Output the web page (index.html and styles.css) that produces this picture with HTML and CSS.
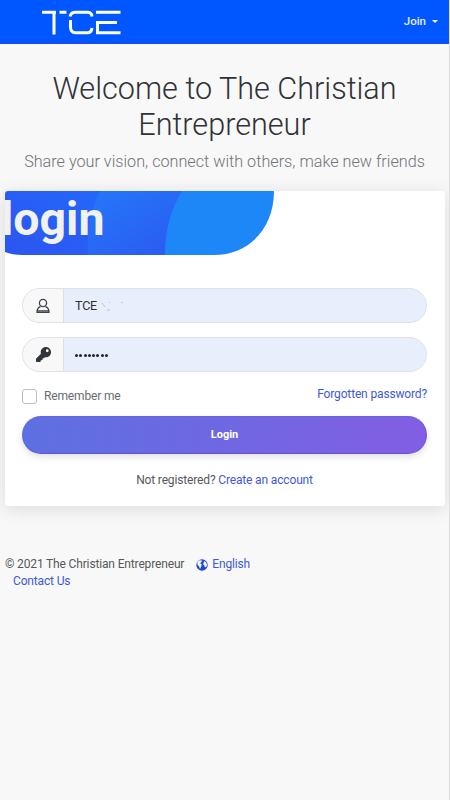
FILE: index.html
```html
<!DOCTYPE html>
<html lang="en">
<head>
<meta charset="utf-8">
<title>The Christian Entrepreneur</title>
<link rel="stylesheet" href="styles.css">
</head>
<body>
<header class="navbar">
  <svg class="logo" width="80" height="26" viewBox="0 0 80 26" role="img" aria-label="TCE">
    <g fill="none" stroke="#fff" stroke-width="3">
      <path d="M0 2.300H14M17.500 2.300H24.500M12 2.500V24.500"/>
      <path d="M28 6.500Q29 2.300 33.500 2.300H45.500Q49.500 2.300 50 6.500M28.500 10V17Q28.500 22.700 33.500 22.700H45.500Q49.500 22.700 50 18"/>
      <path d="M54 2.300H78.500M54 12.500H75M55.500 11V22.700H78.500"/>
    </g>
  </svg>
  <a class="join">Join<span class="caret"></span></a>
</header>
<main>
  <section class="hero">
    <h1>Welcome to The Christian<br>Entrepreneur</h1>
    <p>Share your vision, connect with others, make new friends</p>
  </section>
  <section class="card">
    <div class="banner">
      <svg class="banner-art" width="269" height="64" viewBox="0 0 269 65" preserveAspectRatio="none" aria-hidden="true">
        <defs>
          <linearGradient id="deep" x1="0" y1="1" x2="1" y2="0"><stop stop-color="#2c55ef"/><stop offset="1" stop-color="#2468fc"/></linearGradient>
          <linearGradient id="mid" x1="1" y1="1" x2="0" y2="0"><stop stop-color="#2c57f0"/><stop offset="1" stop-color="#2478f9"/></linearGradient>
        </defs>
        <path fill="url(#deep)" d="M0 0H110V65H18Q7 65 0 62Z"/>
        <path fill="url(#mid)" d="M95 0H190V65H83Q81 28 95 0Z"/>
        <path fill="#1e87f8" d="M177 0H269C269 39 243 65 209 65H160Q160 28 177 0Z"/>
      </svg>
      <h2>login</h2>
    </div>
    <form class="form">
      <div class="field">
        <span class="addon"><svg width="14" height="16" viewBox="0 0 14 16" fill="none" stroke="#3b434c" stroke-width="1.300"><circle cx="7" cy="5" r="3.600"/><path d="M4.500 8.700C2 9.500 1 11 1 14.300H13C13 11 12 9.500 9.500 8.700M1.500 12.800H12.500"/></svg></span>
        <span class="value">TCE<svg class="traces" width="26" height="10" viewBox="0 0 26 10" fill="none" stroke="#b9c4d4"><path d="M1 2L4 6M6 9H9M8.500 1V2M20 1L22 2" /></svg></span>
      </div>
      <div class="field">
        <span class="addon"><svg width="15" height="15" viewBox="0 0 512 512" fill="#30343b"><path d="M512 176c0 97-79 176-176 176-11 0-22-1-33-3l-24 27c-5 5-11 8-18 8h-37v40c0 13-11 24-24 24h-40v40c0 13-11 24-24 24H24c-13 0-24-11-24-24v-78c0-6 3-12 7-17l162-162c-6-17-9-36-9-55C160 79 239 0 336 0s176 78 176 176zM336 128a48 48 0 1 0 96 0 48 48 0 0 0-96 0z"/></svg></span>
        <span class="value dots"><i></i><i></i><i></i><i></i><i></i><i></i><i></i><i></i></span>
      </div>
      <div class="options">
        <label><span class="check"></span>Remember me</label>
        <a class="forgot">Forgotten password?</a>
      </div>
      <button type="button" class="submit">Login</button>
      <p class="register">Not registered? <a>Create an account</a></p>
    </form>
  </section>
</main>
<footer>
  <div class="line"><span class="copy">© 2021 The Christian Entrepreneur</span>
    <svg width="12" height="12" viewBox="0 0 12 12"><circle cx="6" cy="6" r="5.700" fill="#1f47cf"/><path fill="#f4f6ff" d="M1.300 3L3.500 1.300 6 1.500 5.500 3 4.200 4 5.800 5.800 5 8 4 10 3.100 7.500 1.500 5.800ZM8 2L10 3.200 11 5.500 10.300 8 8.800 8.200 8.300 6.300 7.200 5.500Z"/></svg>
    <a class="english">English</a></div>
  <a class="contact">Contact Us</a>
</footer>
</body>
</html>
```
FILE: styles.css
```css
* { box-sizing: border-box; }
html, body { height: 100%; }
body {
  margin: 0;
  overflow: hidden;
  background: #f8f8f8;
  border-right: 1px solid #dedede;
  font: 12px/18px Roboto, sans-serif;
  letter-spacing: -.15px;
  color: #55585b;
}
h1, h2, p { margin: 0; letter-spacing: 0; }
a { color: #3f59d8; }
.navbar {
  height: 44px;
  margin-right: -1px;
  padding: 10px 12px 0 42px;
  display: flex;
  justify-content: space-between;
  align-items: flex-start;
  background: #0057ff;
  border-bottom: 1px solid #2448ed;
}
.logo { display: block; }
.join {
  display: flex;
  align-items: center;
  gap: 6px;
  margin-top: 2px;
  color: #e4edff;
  font-size: 11.500px;
  font-weight: 500;
  letter-spacing: 0;
}
.caret {
  border: 3px solid transparent;
  border-top-color: #fff;
  border-bottom: 0;
}
.hero {
  height: 147px;
  padding-top: 27px;
  text-align: center;
}
h1 {
  color: #303236;
  font-size: 30.600px;
  font-weight: 300;
  line-height: 36px;
}
.hero p {
  margin-top: 9px;
  color: #707378;
  font-size: 16.200px;
  font-weight: 300;
  line-height: 20px;
  white-space: nowrap;
}
.card {
  height: 315px;
  margin: 0 4px 0 5px;
  overflow: hidden;
  background: #fff;
  border-radius: 3px;
  box-shadow: 0 3px 18px rgba(0, 0, 0, .12);
}
.banner { height: 97px; position: relative; }
.banner-art { display: block; }
h2 {
  position: absolute;
  top: 1px;
  left: -4px;
  color: #f1f1f1;
  font-size: 46.500px;
  font-weight: 700;
  line-height: 54px;
}
.form { padding: 0 18px 0 17px; }
.field {
  display: flex;
  height: 35px;
  margin-bottom: 14px;
  overflow: hidden;
  background: #e7effd;
  border: 1px solid #dfe1e5;
  border-radius: 18px;
}
.addon {
  width: 41px;
  display: grid;
  place-items: center;
  background: #f8f8f8;
  border-right: 1px solid #dcdfe4;
}
.value {
  display: flex;
  align-items: center;
  padding: 1px 0 0 11px;
  color: #2b2e33;
  font-size: 12.500px;
}
.traces { margin-left: 4px; }
.dots { gap: 1.300px; }
.dots i { width: 3px; height: 3px; border-radius: 50%; background: #25282d; }
.options {
  height: 31px;
  margin-top: -1px;
  display: flex;
  justify-content: space-between;
}
.options label { display: flex; height: 22px; align-items: center; color: #696c70; }
.check {
  width: 15px;
  height: 15px;
  margin-right: 7px;
  border: 1px solid #b9bec6;
  border-radius: 3px;
  background: #fff;
}
.submit {
  display: block;
  width: 100%;
  height: 38px;
  padding: 0;
  border: 1px solid;
  border-color: #6864df #7550dd #654fdd #5368e3;
  border-radius: 19px;
  background: linear-gradient(90deg, #5d70e2, #825ee3) border-box;
  box-shadow: 0 3px 6px rgba(0, 0, 0, .12);
  color: #fff;
  font: 700 11px/18px Roboto, sans-serif;
}
.register { margin-top: 17px; text-align: center; letter-spacing: -.15px; }
footer { padding: 50px 0 0 5px; line-height: 17px; }
.line { display: flex; align-items: center; }
.line svg { margin: 0 4px 0 12px; }
.contact { display: block; margin-left: 8px; }
```
